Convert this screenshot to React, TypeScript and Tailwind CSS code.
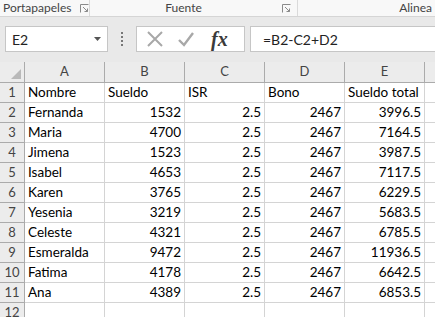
const cols = ["A", "B", "C", "D", "E"];

const rows: (string | number)[][] = [
  ["Nombre", "Sueldo", "ISR", "Bono", "Sueldo total"],
  ["Fernanda", 1532, 2.5, 2467, 3996.5],
  ["Maria", 4700, 2.5, 2467, 7164.5],
  ["Jimena", 1523, 2.5, 2467, 3987.5],
  ["Isabel", 4653, 2.5, 2467, 7117.5],
  ["Karen", 3765, 2.5, 2467, 6229.5],
  ["Yesenia", 3219, 2.5, 2467, 5683.5],
  ["Celeste", 4321, 2.5, 2467, 6785.5],
  ["Esmeralda", 9472, 2.5, 2467, 11936.5],
  ["Fatima", 4178, 2.5, 2467, 6642.5],
  ["Ana", 4389, 2.5, 2467, 6853.5],
  ["", "", "", "", ""],
];

function Launcher() {
  return (
    <svg width="9" height="9" viewBox="0 0 9 9" className="text-[#8a8a8a]">
      <path d="M0.5 8.5V0.5H8.5" fill="none" stroke="currentColor" />
      <path d="M3 3L7.5 7.5M7.5 4.5V7.5H4.5" fill="none" stroke="currentColor" />
    </svg>
  );
}

function Ribbon() {
  return (
    <div className="flex h-[17px] items-center border-b border-[#d5d5d5] bg-[#f8f8f8] text-[12px] leading-none text-[#444]">
      <div className="flex h-full w-[90px] items-center border-r border-[#dadada] pl-[3px]">
        <span>Portapapeles</span>
        <span className="ml-[9px] mt-[1px]"><Launcher /></span>
      </div>
      <div className="relative flex h-full w-[208px] items-center justify-center border-r border-[#dadada]">
        <span className="-ml-[20px]">Fuente</span>
        <span className="absolute right-[6px] top-[4px]"><Launcher /></span>
      </div>
      <div className="flex-1 pr-[3px] text-right">
        <span>Alinea</span>
      </div>
    </div>
  );
}

function FormulaBar() {
  return (
    <div className="flex h-[45px] items-center bg-[#e9e9e9] pb-[1px]">
      <div className="ml-[5px] flex h-[26px] w-[103px] items-center justify-between border border-[#c6c6c6] bg-white px-[6px] text-[14px] text-[#222]">
        <span>E2</span>
        <svg width="7" height="4" viewBox="0 0 7 4"><path d="M0 0H7L3.5 4Z" fill="#555" /></svg>
      </div>
      <div className="ml-[13px] flex flex-col gap-[2px]">
        <span className="h-[2px] w-[2px] bg-[#777]" />
        <span className="h-[2px] w-[2px] bg-[#777]" />
        <span className="h-[2px] w-[2px] bg-[#777]" />
        <span className="h-[2px] w-[2px] bg-[#777]" />
      </div>
      <div className="ml-[13px] flex h-[26px] w-[109px] items-center border border-[#c6c6c6] bg-white">
        <svg width="18" height="18" viewBox="0 0 18 18" className="ml-[9px]">
          <path d="M2 2L16 16M16 2L2 16" stroke="#a8a8a8" strokeWidth="2" fill="none" />
        </svg>
        <svg width="18" height="18" viewBox="0 0 18 18" className="ml-[13px]">
          <path d="M2 10L7 15L16 3" stroke="#a8a8a8" strokeWidth="2.4" fill="none" />
        </svg>
        <span
          className="ml-[16px] text-[20px] font-bold italic leading-none text-[#3a3a3a]"
          style={{ fontFamily: '"Liberation Serif", serif' }}
        >
          fx
        </span>
      </div>
      <div className="ml-[5px] flex h-[26px] flex-1 items-center border border-r-0 border-[#c6c6c6] bg-white pl-[12px] text-[14px] text-[#222]">
        =B2-C2+D2
      </div>
    </div>
  );
}

function Grid() {
  return (
    <div className="grid grid-cols-[25px_repeat(5,80px)_1fr] text-[13.5px] text-black">
      <div className="relative h-[21px] border-r border-b border-[#ababab] bg-[#ececec]">
        <svg width="10" height="10" viewBox="0 0 10 10" className="absolute bottom-[3px] right-[3px]">
          <path d="M10 0V10H0Z" fill="#b9b9b9" />
        </svg>
      </div>
      {cols.map((c) => (
        <div
          key={c}
          className="flex h-[21px] items-center justify-center border-r border-b border-[#ababab] bg-[#ececec] text-[13px] text-[#444]"
        >
          {c}
        </div>
      ))}
      <div className="h-[21px] border-b border-[#ababab] bg-[#ececec]" />
      {rows.map((r, i) => (
        <Row key={i} n={i + 1} cells={r} />
      ))}
    </div>
  );
}

function Row({ n, cells }: { n: number; cells: (string | number)[] }) {
  return (
    <>
      <div className="flex h-[20px] items-center justify-center border-r border-b border-[#ababab] bg-[#ececec] text-[13px] text-[#444]">
        {n}
      </div>
      {cells.map((v, j) => (
        <div
          key={j}
          className={
            "flex h-[20px] items-center whitespace-nowrap border-r border-b border-[#d4d4d4] px-[3px] " +
            (typeof v === "number" ? "justify-end" : "justify-start")
          }
        >
          {v}
        </div>
      ))}
      <div className="h-[20px] border-b border-[#d4d4d4]" />
    </>
  );
}

export default function App() {
  return (
    <div
      className="h-[317px] w-[435px] overflow-hidden bg-white"
      style={{ fontFamily: '"Lato", "Liberation Sans", sans-serif' }}
    >
      <Ribbon />
      <FormulaBar />
      <Grid />
    </div>
  );
}
